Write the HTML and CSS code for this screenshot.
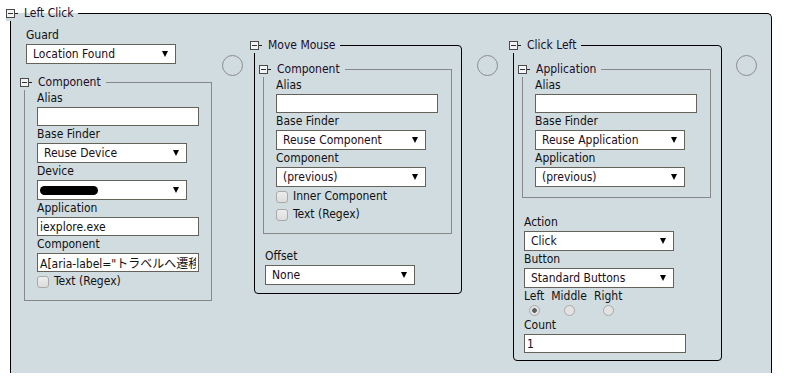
FILE: index.html
```html
<!doctype html>
<html>
<head>
  <meta charset="utf-8"/>
  <title>Left Click</title>
  <link rel="stylesheet" href="styles.css">
</head>
<body>
  <div class="group outer">
    <div class="legend"><span class="toggle"></span>Left Click</div>

    <div class="col">
      <div class="field">
        <label>Guard</label>
        <div class="select"><select><option>Location Found</option></select></div>
      </div>
      <div class="group sub">
        <div class="legend"><span class="toggle"></span>Component</div>
        <label>Alias</label>
        <input type="text" value="">
        <label>Base Finder</label>
        <div class="select"><select><option>Reuse Device</option></select></div>
        <label class="gap">Device</label>
        <div class="select"><select><option></option></select><span class="redact"></span></div>
        <label>Application</label>
        <input type="text" value="iexplore.exe">
        <label>Component</label>
        <input type="text" value='A[aria-label="トラベルへ遷移"]'>
        <div class="check"><input type="checkbox">Text (Regex)</div>
      </div>
    </div>

    <div class="port first"></div>

    <div class="group step">
      <div class="legend"><span class="toggle"></span>Move Mouse</div>
      <div class="group sub">
        <div class="legend"><span class="toggle"></span>Component</div>
        <label>Alias</label>
        <input type="text" value="">
        <label>Base Finder</label>
        <div class="select"><select><option>Reuse Component</option></select></div>
        <label>Component</label>
        <div class="select"><select><option>(previous)</option></select></div>
        <div class="check"><input type="checkbox">Inner Component</div>
        <div class="check"><input type="checkbox">Text (Regex)</div>
      </div>
      <div class="field after">
        <label>Offset</label>
        <div class="select"><select><option>None</option></select></div>
      </div>
    </div>

    <div class="port"></div>

    <div class="group step click">
      <div class="legend"><span class="toggle"></span>Click Left</div>
      <div class="group sub">
        <div class="legend"><span class="toggle"></span>Application</div>
        <label>Alias</label>
        <input type="text" value="">
        <label>Base Finder</label>
        <div class="select"><select><option>Reuse Application</option></select></div>
        <label>Application</label>
        <div class="select"><select><option>(previous)</option></select></div>
      </div>
      <div class="field after action">
        <label>Action</label>
        <div class="select"><select><option>Click</option></select></div>
        <label>Button</label>
        <div class="select"><select><option>Standard Buttons</option></select></div>
        <div class="radios">
          <div class="opt"><span>Left</span><input type="radio" name="btn" checked></div>
          <div class="opt"><span>Middle</span><input type="radio" name="btn"></div>
          <div class="opt"><span>Right</span><input type="radio" name="btn"></div>
        </div>
        <label class="count">Count</label>
        <input type="text" value="1">
      </div>
    </div>

    <div class="port last"></div>
  </div>
</body>
</html>
```

FILE: styles.css
```css
html, body {
  margin: 0;
  background: #fff;
  --bg: #d0dce0;
  font-family: "DejaVu Sans Condensed", "DejaVu Sans", "Noto Sans CJK JP", sans-serif;
  font-stretch: semi-condensed;
  font-size: 12px;
  color: #111;
}

/* boxes with a collapsible title on the top border */
.group {
  position: relative;
  box-sizing: border-box;
  background: var(--bg);
  border: 1px solid #000;
}
.legend {
  position: absolute;
  top: -8px;
  left: -5px;
  height: 15px;
  line-height: 15px;
  display: flex;
  align-items: center;
  padding-right: 5px;
  background: var(--bg);
  color: #220c26;
  white-space: nowrap;
}
.outer > .legend {
  background: linear-gradient(#fff 7px, var(--bg) 7px);
}
.toggle {
  position: relative;
  box-sizing: border-box;
  width: 9px;
  height: 9px;
  margin-right: 9px;
  border: 1px solid #4a4a4a;
  background: #f1f3f4;
}
.toggle::before {
  content: "";
  position: absolute;
  left: 1px;
  top: 3px;
  width: 5px;
  height: 1px;
  background: #333;
}
.toggle::after {
  content: "";
  position: absolute;
  left: 8px;
  top: 3px;
  width: 3px;
  height: 1px;
  background: #222;
}

.outer {
  width: 762px;
  height: 360px;
  margin: 13px 0 0 10px;
  padding: 13px 0 0 13px;
  border-bottom: none;
  border-top-right-radius: 5px;
  display: flex;
  align-items: flex-start;
}
.col {
  width: 188px;
  flex: none;
}
.step {
  flex: none;
  width: 208px;
  margin-top: 18px;
  padding: 23px 9px 8px 8px;
  border-radius: 0 4px 4px 4px;
}
.step.click {
  width: 209px;
  padding: 23px 10px 7px 8px;
}
.sub {
  width: 189px;
  border-color: #888;
  padding: 7px 0 10px 12px;
}
.col .sub {
  width: 188px;
  margin-top: 18px;
}

/* connectors between steps */
.port {
  flex: none;
  box-sizing: border-box;
  width: 21px;
  height: 21px;
  margin: 28px 15px 0 15px;
  border: 1px solid #8c8c8c;
  border-radius: 50%;
}
.port.first { margin: 28px 11px 0 10px; }
.port.last { margin-left: 14px; }

/* fields */
.field { margin-left: 2px; }
.field.after { margin-top: 14px; }
.field.action { margin-top: 16px; }
label {
  display: block;
  line-height: 17px;
}
label.count { margin-top: 1px; }
input[type=text] {
  display: block;
  box-sizing: border-box;
  width: 162px;
  height: 19px;
  margin: 0;
  padding: 0 2px;
  border: 1px solid #65625a;
  border-radius: 0;
  background: #fff;
  font: inherit;
  color: #111;
  outline: none;
}
.select {
  position: relative;
  width: 150px;
  height: 20px;
}
.select::after {
  content: "";
  position: absolute;
  right: 8px;
  top: 7px;
  border-left: 3px solid transparent;
  border-right: 3px solid transparent;
  border-top: 6px solid #000;
}
.select select {
  display: block;
  box-sizing: border-box;
  width: 100%;
  height: 20px;
  margin: 0;
  padding: 0 0 0 6px;
  appearance: none;
  border: 1px solid #65625a;
  border-radius: 0;
  background: #fff;
  font: inherit;
  color: #200c20;
  outline: none;
}
.redact {
  position: absolute;
  left: 3px;
  top: 6px;
  width: 58px;
  height: 9px;
  border-radius: 5px;
  background: #000;
}

.check {
  display: flex;
  align-items: center;
  line-height: 17px;
  margin-top: 1px;
}
.check input {
  appearance: none;
  box-sizing: border-box;
  width: 12px;
  height: 12px;
  margin: 0 5px 0 0;
  border: 1px solid #a9a9a9;
  border-radius: 3px;
  background: linear-gradient(#ededed, #dcdcdc);
}

.radios {
  display: flex;
  gap: 7px;
}
.opt {
  display: flex;
  flex-direction: column;
  align-items: center;
  line-height: 17px;
}
.opt input {
  appearance: none;
  box-sizing: border-box;
  width: 11px;
  height: 11px;
  margin: 0;
  border: 1px solid #a9a9a9;
  border-radius: 50%;
  background: #e2e2e2;
}
.opt input:checked {
  background: radial-gradient(circle, #5c5c5c 0 2px, #e2e2e2 2.6px);
}
```
